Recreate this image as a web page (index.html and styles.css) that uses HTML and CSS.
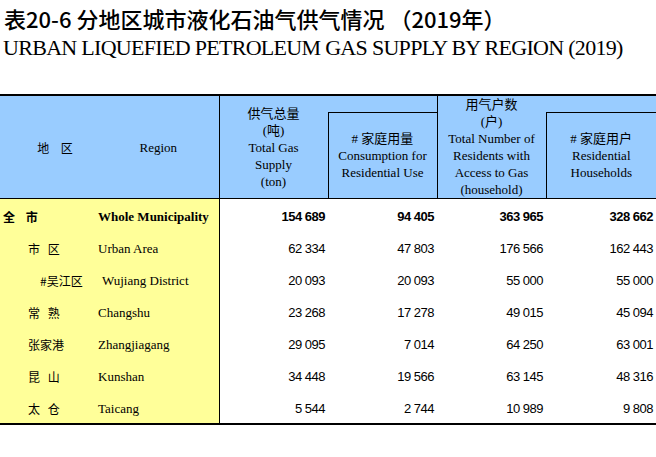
FILE: index.html
```html
<!DOCTYPE html>
<html lang="zh-CN">
<head>
<meta charset="utf-8">
<title>表20-6 分地区城市液化石油气供气情况</title>
<link rel="stylesheet" href="styles.css">
</head>
<body>
<div class="page">
  <h1 class="title-zh">表20-6 分地区城市液化石油气供气情况 （2019年）</h1>
  <h2 class="title-en">URBAN LIQUEFIED PETROLEUM GAS SUPPLY BY REGION (2019)</h2>
  <table class="data">
    <colgroup>
      <col class="w-zh">
      <col class="w-en">
      <col class="w-c2">
      <col class="w-c3">
      <col class="w-c4">
      <col class="w-c5">
    </colgroup>
    <thead>
      <tr class="hr1">
        <th class="h-zh" rowspan="2">地 区</th>
        <th class="h-en" rowspan="2">Region</th>
        <th class="h-c2" rowspan="2">供气总量<br>(吨)<br>Total Gas<br>Supply<br>(ton)</th>
        <th class="h-blank"></th>
        <th class="h-c4" rowspan="2">用气户数<br>(户)<br>Total Number of<br>Residents with<br>Access to Gas<br>(household)</th>
        <th class="h-blank"></th>
      </tr>
      <tr class="hr2">
        <th class="h-sub"># 家庭用量<br>Consumption for<br>Residential Use</th>
        <th class="h-sub"># 家庭用户<br>Residential<br>Households</th>
      </tr>
    </thead>
    <tbody>
      <tr class="total">
        <td class="zh lv0 wide">全 市</td>
        <td class="en">Whole Municipality</td>
        <td class="num">154 689</td>
        <td class="num">94 405</td>
        <td class="num">363 965</td>
        <td class="num">328 662</td>
      </tr>
      <tr>
        <td class="zh lv1">市 区</td>
        <td class="en">Urban Area</td>
        <td class="num">62 334</td>
        <td class="num">47 803</td>
        <td class="num">176 566</td>
        <td class="num">162 443</td>
      </tr>
      <tr>
        <td class="zh lv2">#吴江区</td>
        <td class="en en-sub">Wujiang District</td>
        <td class="num">20 093</td>
        <td class="num">20 093</td>
        <td class="num">55 000</td>
        <td class="num">55 000</td>
      </tr>
      <tr>
        <td class="zh lv1">常 熟</td>
        <td class="en">Changshu</td>
        <td class="num">23 268</td>
        <td class="num">17 278</td>
        <td class="num">49 015</td>
        <td class="num">45 094</td>
      </tr>
      <tr>
        <td class="zh lv1">张家港</td>
        <td class="en">Zhangjiagang</td>
        <td class="num">29 095</td>
        <td class="num">7 014</td>
        <td class="num">64 250</td>
        <td class="num">63 001</td>
      </tr>
      <tr>
        <td class="zh lv1">昆 山</td>
        <td class="en">Kunshan</td>
        <td class="num">34 448</td>
        <td class="num">19 566</td>
        <td class="num">63 145</td>
        <td class="num">48 316</td>
      </tr>
      <tr>
        <td class="zh lv1">太 仓</td>
        <td class="en">Taicang</td>
        <td class="num">5 544</td>
        <td class="num">2 744</td>
        <td class="num">10 989</td>
        <td class="num">9 808</td>
      </tr>
    </tbody>
  </table>
</div>
</body>
</html>
```
FILE: styles.css
```css
html, body {
  margin: 0;
  padding: 0;
  background: #ffffff;
}

.page {
  width: 656px;
  color: #000000;
}

.title-zh {
  margin: 6px 0 0 0;
  padding-left: 4px;
  font-family: "Noto Sans CJK SC", "Noto Sans", sans-serif;
  font-size: 22px;
  line-height: 24px;
  font-weight: 500;
  white-space: nowrap;
}

.title-en {
  margin: 6px 0 0 0;
  padding-left: 3px;
  font-family: "Liberation Serif", serif;
  font-size: 22px;
  line-height: 24px;
  font-weight: normal;
  letter-spacing: -0.7px;
  white-space: nowrap;
}

.data {
  margin-top: 34px;
  width: 656px;
  table-layout: fixed;
  border-collapse: collapse;
  border-top: 2px solid #000;
  border-bottom: 2px solid #000;
}

.w-zh { width: 98px; }
.w-en { width: 121px; }
.w-c2 { width: 109px; }
.w-c3 { width: 109px; }
.w-c4 { width: 109px; }
.w-c5 { width: 110px; }

.data th {
  background: #99ccff;
  padding: 0;
  font-family: "Liberation Serif", "Noto Sans CJK SC", serif;
  font-size: 13px;
  line-height: 17px;
  font-weight: normal;
  text-align: center;
  vertical-align: middle;
}

.hr1 { height: 17px; }

.h-zh {
  border-bottom: 1px solid #000;
  padding-left: 12px !important;
  word-spacing: 9px;
  font-family: "Noto Sans CJK SC", sans-serif !important;
  font-size: 12px !important;
}

.h-en {
  border-bottom: 1px solid #000;
}

.h-c2 {
  border-left: 1px solid #000;
  border-bottom: 1px solid #000;
}

.h-c4 {
  border-left: 1px solid #000;
  border-bottom: 1px solid #000;
}

.h-sub {
  border-left: 1px solid #000;
  border-top: 1px solid #000;
  border-bottom: 1px solid #000;
  padding-top: 1px !important;
}

.data td {
  height: 29px;
  padding: 3px 0 0 0;
  vertical-align: middle;
  white-space: nowrap;
}

.zh {
  background: #ffff99;
  font-family: "Noto Sans CJK SC", sans-serif;
  font-size: 12px;
  word-spacing: 5px;
}

.data .wide { word-spacing: 8px; }

.data .lv0 { padding-left: 3px; }
.data .lv1 { padding-left: 28px; }
.data .lv2 { padding-left: 40px; }

.en {
  background: #ffff99;
  border-right: 1px solid #000;
  font-family: "Liberation Serif", serif;
  font-size: 13px;
}

.data .en-sub { padding-left: 4px; }

.data .num {
  text-align: right;
  padding-right: 3px;
  font-family: "Liberation Sans", Arial, sans-serif;
  font-size: 13px;
  letter-spacing: -0.5px;
}

.total td {
  font-weight: bold;
}
```
